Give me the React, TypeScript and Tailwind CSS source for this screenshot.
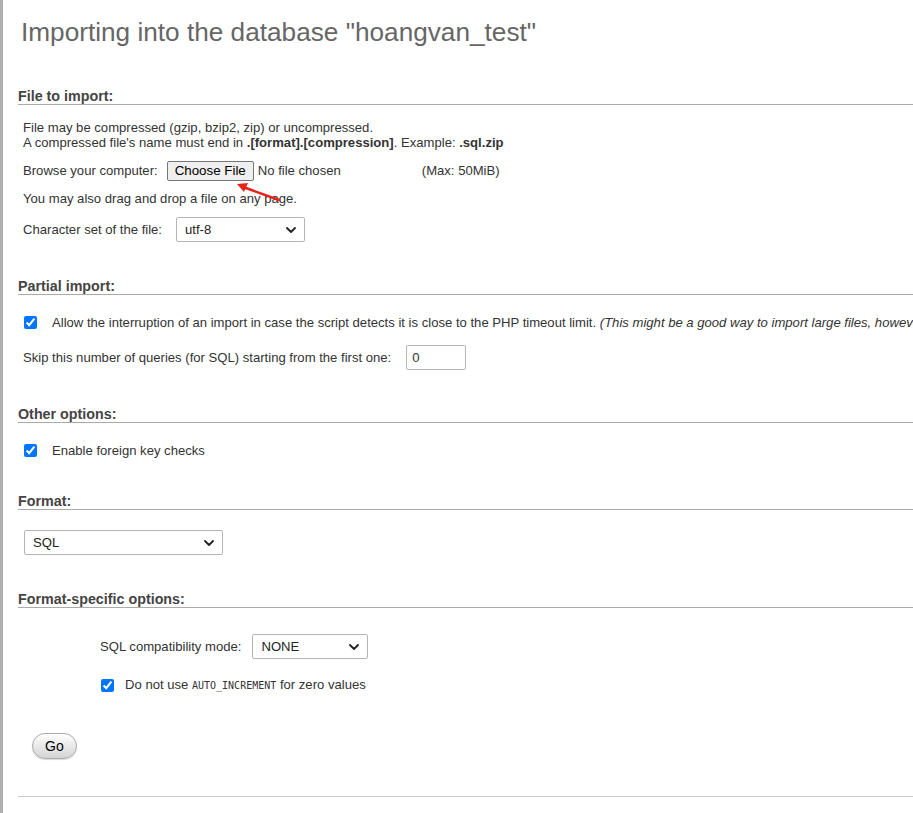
import React from "react";

function Chevron() {
  return (
    <svg
      className="pointer-events-none absolute right-[9px] top-1/2 -translate-y-1/2"
      width="10"
      height="6"
      viewBox="0 0 10 6"
      fill="none"
    >
      <path d="M1 1l4 4 4-4" stroke="#222" strokeWidth="1.8" strokeLinecap="round" strokeLinejoin="round" />
    </svg>
  );
}

function Select({ value, options, width }: { value: string; options: string[]; width: string }) {
  return (
    <div className={`relative ${width}`}>
      <select
        defaultValue={value}
        className="h-[25px] w-full appearance-none rounded-[2px] border border-[#b5b5b5] bg-white pl-[8px] pr-[24px] text-[13.1px] text-[#222] outline-none"
      >
        {options.map((o) => (
          <option key={o}>{o}</option>
        ))}
      </select>
      <Chevron />
    </div>
  );
}

function Header({ children, className = "" }: { children: React.ReactNode; className?: string }) {
  return (
    <div className={`border-b border-[#aaa] text-[14.3px] font-bold leading-[15px] text-[#444] ${className}`}>
      {children}
    </div>
  );
}

export default function App() {
  return (
    <div className="relative min-h-screen w-[913px] overflow-hidden border-l-[3px] border-[#b0b0b0] bg-white pl-[15px] font-['Liberation_Sans',Arial,sans-serif] text-[13.1px] text-[#333]">
      <h2 className="pt-[17px] pl-[3px] text-[26.2px] font-normal leading-[30px] text-[#666]">
        Importing into the database "hoangvan_test"
      </h2>

      {/* File to import */}
      <Header className="mt-[42px]">File to import:</Header>
      <div className="pl-[5px] pt-[15px]">
        <div className="leading-[15px]">
          File may be compressed (gzip, bzip2, zip) or uncompressed.
          <br />
          A compressed file's name must end in <b>.[format].[compression]</b>. Example: <b>.sql.zip</b>
        </div>
        <div className="mt-[11px] flex h-[20px] items-center">
          <span>Browse your computer:</span>
          <button className="ml-[9px] h-[20px] rounded-[2px] border border-[#767676] bg-[#efefef] px-[7px] text-[13.33px] leading-[18px] text-black">
            Choose File
          </button>
          <span className="ml-[4px] w-[164px]">No file chosen</span>
          <span>(Max: 50MiB)</span>
        </div>
        <div className="mt-[10px] leading-[15px]">You may also drag and drop a file on any page.</div>
        <div className="mt-[11px] flex items-center">
          <span>Character set of the file:</span>
          <div className="ml-[14px]">
            <Select value="utf-8" options={["utf-8"]} width="w-[129px]" />
          </div>
        </div>
      </div>

      {/* Partial import */}
      <Header className="mt-[37px]">Partial import:</Header>
      <div className="pl-[6px] pt-[20px]">
        <label className="flex items-center whitespace-nowrap leading-[15px]">
          <input type="checkbox" defaultChecked className="m-0 h-[13px] w-[13px] shrink-0" />
          <span className="ml-[15px]">
            Allow the interruption of an import in case the script detects it is close to the PHP timeout limit.{" "}
            <i>(This might be a good way to import large files, however it can break transactions.)</i>
          </span>
        </label>
      </div>
      <div className="mt-[15px] flex items-center pl-[5px]">
        <span>Skip this number of queries (for SQL) starting from the first one:</span>
        <input
          type="text"
          defaultValue="0"
          className="ml-[15px] h-[25px] w-[60px] rounded-[2px] border border-[#b5b5b5] bg-white px-[5px] text-[13.1px] text-[#333] outline-none"
        />
      </div>

      {/* Other options */}
      <Header className="mt-[37px]">Other options:</Header>
      <div className="pl-[6px] pt-[20px]">
        <label className="flex items-center leading-[15px]">
          <input type="checkbox" defaultChecked className="m-0 h-[13px] w-[13px] shrink-0" />
          <span className="ml-[15px]">Enable foreign key checks</span>
        </label>
      </div>

      {/* Format */}
      <Header className="mt-[36px]">Format:</Header>
      <div className="pl-[6px] pt-[20px]">
        <Select value="SQL" options={["SQL", "CSV", "CSV using LOAD DATA", "ESRI Shape File", "MediaWiki Table", "OpenDocument Spreadsheet", "XML"]} width="w-[199px]" />
      </div>

      {/* Format-specific options */}
      <Header className="mt-[37px]">Format-specific options:</Header>
      <div className="pl-[82px] pt-[26px]">
        <div className="flex items-center">
          <span>SQL compatibility mode:</span>
          <div className="ml-[11px]">
            <Select value="NONE" options={["NONE", "ANSI", "DB2", "MAXDB", "MYSQL323", "MYSQL40", "MSSQL", "ORACLE", "TRADITIONAL"]} width="w-[116px]" />
          </div>
        </div>
        <label className="mt-[18px] flex items-center leading-[15px]">
          <input type="checkbox" defaultChecked className="m-0 ml-[1px] h-[13px] w-[13px] shrink-0" />
          <span className="ml-[11px]">
            Do not use{" "}
            <code className="font-['DejaVu_Sans_Mono','Liberation_Mono',monospace] text-[10px]">AUTO_INCREMENT</code>{" "}
            for zero values
          </span>
        </label>
      </div>

      <div className="pl-[14px] pt-[40px]">
        <button className="h-[26px] rounded-full border border-[#aaa] bg-gradient-to-b from-white to-[#d4d4d4] px-[12px] text-[14px] text-black shadow-[0_1px_1px_rgba(0,0,0,0.15)]">
          Go
        </button>
      </div>

      <div className="mt-[37px] border-b border-[#ccc]" />

      {/* annotation arrow */}
      <svg
        className="pointer-events-none absolute left-[228px] top-[179px]"
        width="54"
        height="26"
        viewBox="0 0 54 26"
      >
        <line x1="48" y1="21" x2="12" y2="8" stroke="#e8231a" strokeWidth="2.5" strokeLinecap="round" />
        <path d="M6 5 L17 4 L13 13 Z" fill="#e8231a" />
      </svg>
    </div>
  );
}
